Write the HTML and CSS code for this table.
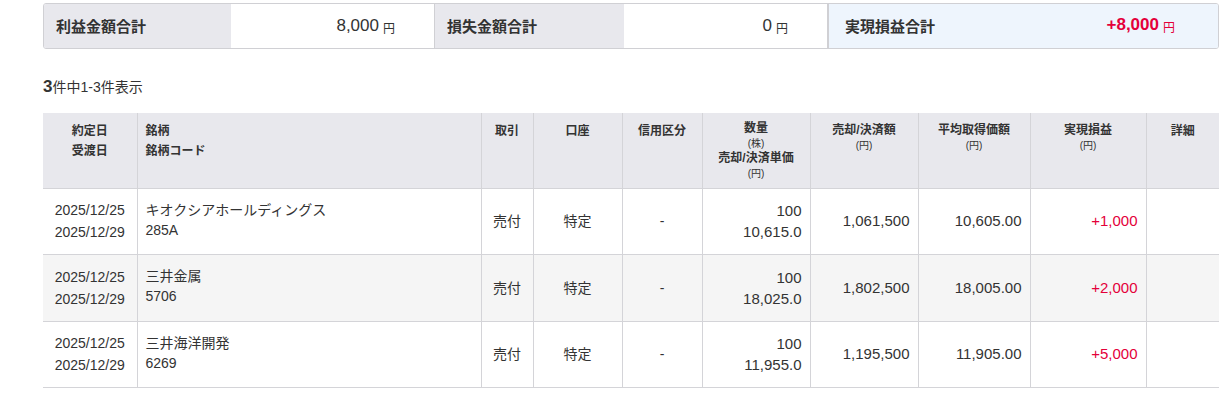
FILE: index.html
```html
<!DOCTYPE html>
<html lang="ja">
<head>
<meta charset="utf-8">
<link rel="stylesheet" href="styles.css">
</head>
<body>
<div class="page">
  <div class="summary">
    <div class="s-label">利益金額合計</div>
    <div class="s-value"><span class="num">8,000</span><span class="yen">円</span></div>
    <div class="s-label">損失金額合計</div>
    <div class="s-value"><span class="num">0</span><span class="yen">円</span></div>
    <div class="s-total">
      <div class="s-tlabel">実現損益合計</div>
      <div class="s-tvalue"><span class="num">+8,000</span><span class="yen">円</span></div>
    </div>
  </div>

  <div class="count"><b>3</b>件中1-3件表示</div>

  <table class="grid">
    <colgroup>
      <col style="width:94px"><col style="width:344px"><col style="width:52px"><col style="width:89px"><col style="width:80px"><col style="width:108px"><col style="width:108px"><col style="width:112px"><col style="width:116px"><col style="width:73px">
    </colgroup>
    <thead>
      <tr>
        <th>約定日<br>受渡日</th>
        <th class="left">銘柄<br>銘柄コード</th>
        <th>取引</th>
        <th>口座</th>
        <th>信用区分</th>
        <th>数量<br><span class="unit">(株)</span><br>売却/決済単価<br><span class="unit">(円)</span></th>
        <th>売却/決済額<br><span class="unit">(円)</span></th>
        <th>平均取得価額<br><span class="unit">(円)</span></th>
        <th>実現損益<br><span class="unit">(円)</span></th>
        <th>詳細</th>
      </tr>
    </thead>
    <tbody>
      <tr>
        <td class="date">2025/12/25<br>2025/12/29</td>
        <td class="name"><div class="nm">キオクシアホールディングス</div><div class="code">285A</div></td>
        <td class="center">売付</td>
        <td class="center">特定</td>
        <td class="center">-</td>
        <td class="right qty">100<br>10,615.0</td>
        <td class="right">1,061,500</td>
        <td class="right">10,605.00</td>
        <td class="right plus">+1,000</td>
        <td></td>
      </tr>
      <tr class="alt">
        <td class="date">2025/12/25<br>2025/12/29</td>
        <td class="name"><div class="nm">三井金属</div><div class="code">5706</div></td>
        <td class="center">売付</td>
        <td class="center">特定</td>
        <td class="center">-</td>
        <td class="right qty">100<br>18,025.0</td>
        <td class="right">1,802,500</td>
        <td class="right">18,005.00</td>
        <td class="right plus">+2,000</td>
        <td></td>
      </tr>
      <tr>
        <td class="date">2025/12/25<br>2025/12/29</td>
        <td class="name"><div class="nm">三井海洋開発</div><div class="code">6269</div></td>
        <td class="center">売付</td>
        <td class="center">特定</td>
        <td class="center">-</td>
        <td class="right qty">100<br>11,955.0</td>
        <td class="right">1,195,500</td>
        <td class="right">11,905.00</td>
        <td class="right plus">+5,000</td>
        <td></td>
      </tr>
    </tbody>
  </table>
</div>
</body>
</html>
```
FILE: styles.css
```css
* { box-sizing: border-box; }
html, body { margin: 0; padding: 0; background: #fff; }
body {
  font-family: "Liberation Sans", Arial, "Noto Sans CJK JP", sans-serif;
  color: #333;
}
.page { padding: 3px 13px 0 43px; }

.summary {
  display: flex;
  height: 46px;
  border: 1px solid #d0d0d4;
  border-radius: 3px;
  overflow: hidden;
}
.s-label {
  width: 187px;
  background: #e8e8ed;
  font-weight: bold;
  font-size: 15px;
  padding-left: 12px;
  display: flex;
  align-items: center;
  padding-bottom: 2px;
}
.s-label + .s-value { width: 203px; }
.s-value {
  background: #fff;
  display: flex;
  align-items: center;
  justify-content: flex-end;
  padding-right: 39px;
  padding-bottom: 1px;
}
.s-label:nth-child(3) { width: 190px; border-left: 1px solid #d0d0d4; }
.num { font-size: 17px; }
.yen { font-size: 12px; margin-left: 4px; padding-top: 3px; }
.s-total {
  flex: 1;
  background: #eef5fd;
  border-left: 2px solid #d0d0d4;
  display: flex;
  align-items: center;
  justify-content: space-between;
  padding: 0 43px 2px 16px;
}
.s-tlabel { font-weight: bold; font-size: 15px; }
.s-tvalue { color: #e4003a; display: flex; align-items: center; }
.s-tvalue .num { font-weight: bold; }
.s-tvalue .yen { font-weight: normal; }

.count {
  font-size: 14px;
  margin-top: 28px;
  height: 20px;
  line-height: 20px;
}
.count b { font-size: 17px; }

.grid {
  margin-top: 16px;
  width: 1176px;
  table-layout: fixed;
  border-collapse: collapse;
  font-size: 15px;
}
.grid th {
  background: #e8e8ed;
  font-size: 12px;
  font-weight: bold;
  vertical-align: top;
  text-align: center;
  padding: 8px 4px 0;
  height: 75px;
  line-height: 20px;
  border-left: 1px solid #d4d4d8;
  border-bottom: 1px solid #d4d4d8;
}
.grid th:first-child, .grid td:first-child { border-left: none; }
.grid th.left { text-align: left; padding-left: 8px; }
.grid th .unit { font-weight: normal; font-size: 10px; line-height: 12px; display: inline-block; }
.grid th:nth-child(6) { line-height: 15px; padding-top: 8px; }
.grid th:nth-child(6) .unit { line-height: 15px; }
.grid th:nth-child(n+7):not(:last-child) { line-height: 15px; padding-top: 10px; }

.grid td {
  height: 66.5px;
  border-left: 1px solid #d4d4d8;
  border-bottom: 1px solid #d4d4d8;
  padding: 0 8px;
  vertical-align: middle;
  line-height: 22px;
}
.grid tr.alt td { background: #f5f5f5; }
.grid td.date { text-align: center; padding: 0 4px; font-size: 14px; }
.grid td.name { padding-left: 8px; padding-bottom: 3px; }
.nm { font-size: 14px; line-height: 20px; }
.code { font-size: 14px; line-height: 20px; }
.grid td.center { text-align: center; font-size: 14px; }
.grid td.right { text-align: right; }
.grid td.qty { line-height: 21px; }
.grid td.plus { color: #e4003a; }
```
